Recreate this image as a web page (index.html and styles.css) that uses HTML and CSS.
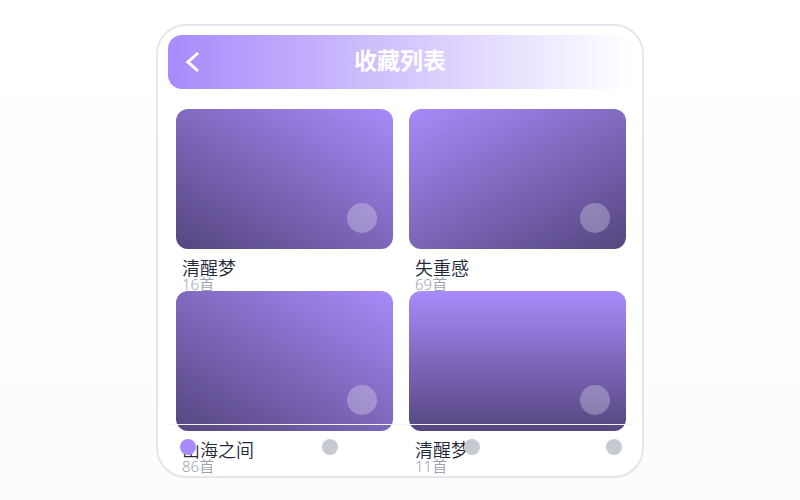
FILE: index.html
```html
<!DOCTYPE html>
<html lang="zh-CN">
<head>
<meta charset="utf-8">
<meta name="viewport" content="width=device-width, initial-scale=1">
<title>收藏列表</title>
<link rel="stylesheet" href="styles.css">
</head>
<body>
<main class="device">
  <header class="topbar">
    <button class="back" type="button" aria-label="返回">
      <svg viewBox="0 0 14 22" width="14" height="22" aria-hidden="true"><path d="M12 2 2 11 12 20"/></svg>
    </button>
    <h1 class="title">收藏列表</h1>
  </header>
  <section class="grid">
    <article class="card">
      <div class="cover cover-rise"><span class="play"></span></div>
      <h2 class="name">清醒梦</h2>
      <p class="count">16首</p>
    </article>
    <article class="card">
      <div class="cover cover-fall"><span class="play"></span></div>
      <h2 class="name">失重感</h2>
      <p class="count">69首</p>
    </article>
    <article class="card">
      <div class="cover cover-rise"><span class="play"></span></div>
      <h2 class="name">山海之间</h2>
      <p class="count">86首</p>
    </article>
    <article class="card">
      <div class="cover cover-down"><span class="play"></span></div>
      <h2 class="name">清醒梦</h2>
      <p class="count">11首</p>
    </article>
  </section>
  <nav class="tabs">
    <span class="dot dot-active"></span>
    <span class="dot"></span>
    <span class="dot"></span>
    <span class="dot"></span>
  </nav>
</main>
</body>
</html>
```

FILE: styles.css
```css
* {
  box-sizing: border-box;
}

body {
  margin: 0;
  min-height: 100vh;
  padding: 24px 16px 16px;
  background: linear-gradient(#ffffff, #fcfcfc);
  font-family: "Noto Sans", "Noto Sans CJK SC", sans-serif;
}

.device {
  position: relative;
  max-width: 488px;
  margin: 0 auto;
  padding: 9px 10px 3px;
  border: 2px solid #e5e5eb;
  border-radius: 30px;
  background: #ffffff;
}

.topbar {
  display: grid;
  grid-template-columns: 14px 1fr 14px;
  align-items: center;
  height: 54px;
  padding: 0 18px;
  border-radius: 14px;
  background: linear-gradient(90deg, #a78bfa, #ffffff);
}

.back {
  display: flex;
  padding: 0;
  border: 0;
  background: none;
}

.back path {
  fill: none;
  stroke: #ffffff;
  stroke-width: 3;
}

.title {
  margin: 0;
  padding-bottom: 4px;
  color: #ffffff;
  font-size: 23px;
  font-weight: 700;
  line-height: 32px;
  text-align: center;
}

.grid {
  display: grid;
  grid-template-columns: 1fr 1fr;
  gap: 0 16px;
  padding: 20px 6px 0 8px;
}

.card {
  height: 182px;
}

.cover {
  display: flex;
  align-items: flex-end;
  justify-content: flex-end;
  height: 140px;
  padding: 16px;
  border-radius: 12px;
}

.cover-rise {
  background: linear-gradient(30deg, #55467f, #a78bfa);
}

.cover-fall {
  background: linear-gradient(152deg, #a78bfa, #55467f);
}

.cover-down {
  background: linear-gradient(#a78bfa, #55467f);
}

.play {
  width: 30px;
  height: 30px;
  border-radius: 50%;
  background: rgba(255, 255, 255, 0.27);
}

.name,
.count {
  margin: 0;
  padding-left: 6px;
}

.name {
  margin-top: 9px;
  color: #1f2937;
  font-size: 18px;
  font-weight: 350;
  line-height: 20px;
}

.count {
  color: #9ca3af;
  font-size: 15px;
  font-weight: 350;
  line-height: 12px;
}

.tabs {
  position: absolute;
  right: 10px;
  bottom: 0;
  left: 10px;
  display: flex;
  align-items: flex-start;
  justify-content: space-between;
  height: 52px;
  padding: 14px 10px 0 12px;
  border-top: 1px solid #f3f4f6;
}

.dot {
  width: 16px;
  height: 16px;
  border-radius: 50%;
  background: #c7cbd1;
}

.dot-active {
  background: #a78bfa;
}
```
